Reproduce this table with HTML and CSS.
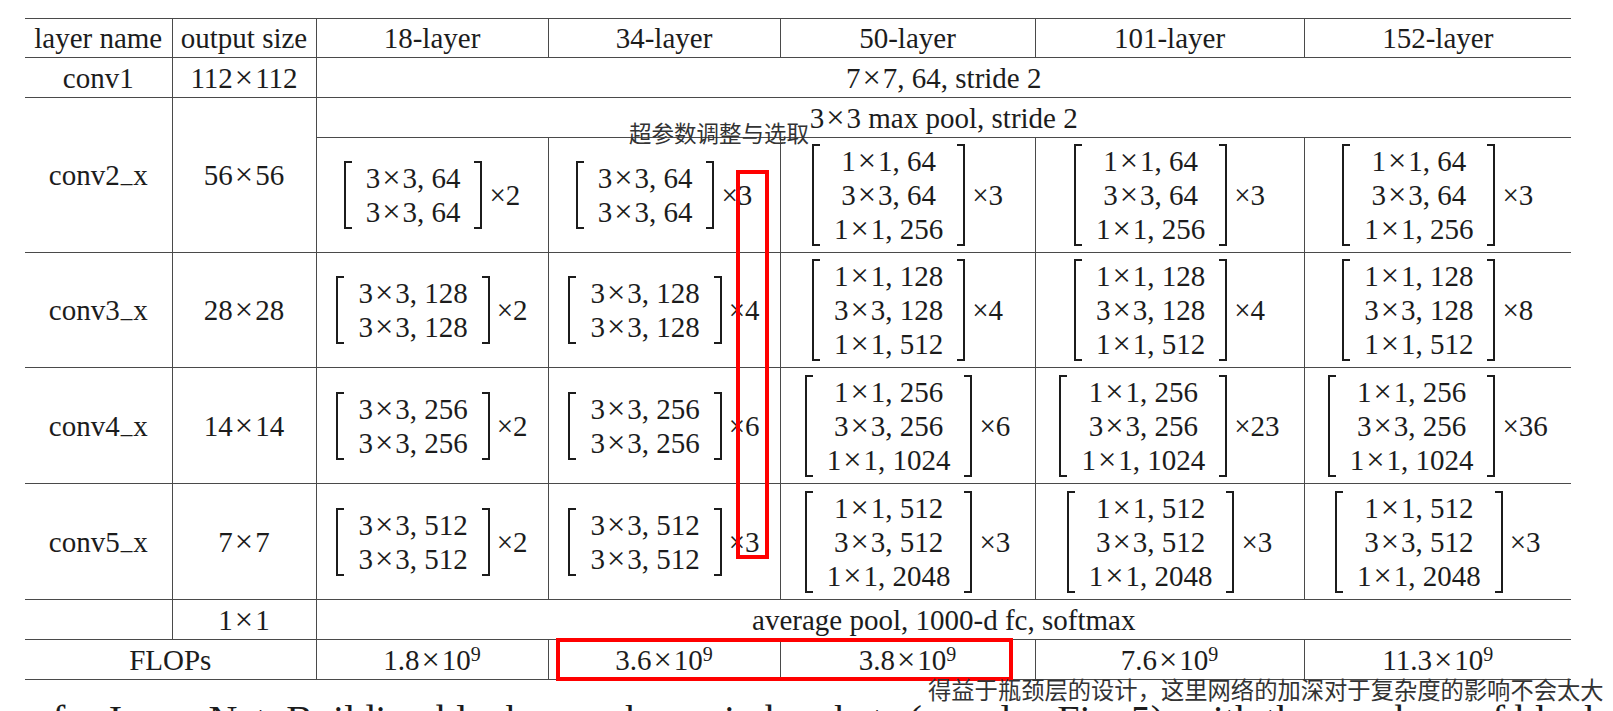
FILE: index.html
```html
<!DOCTYPE html>
<html>
<head>
  <meta charset="utf-8">
  <title>ImageNet architectures</title>
  <link rel="stylesheet" href="styles.css">
</head>
<body>
  <div class="sheet">
    <table class="arch">
      <colgroup>
        <col class="c-name"><col class="c-size"><col class="c-18"><col class="c-34"><col class="c-50"><col class="c-101"><col class="c-152">
      </colgroup>
      <tr class="r-head">
        <td>layer name</td>
        <td>output size</td>
        <td>18-layer</td>
        <td>34-layer</td>
        <td>50-layer</td>
        <td>101-layer</td>
        <td>152-layer</td>
      </tr>
      <tr class="r-line">
        <td>conv1</td>
        <td>112<span class="x">×</span>112</td>
        <td colspan="5">7<span class="x">×</span>7, 64, stride 2</td>
      </tr>
      <tr class="r-line">
        <td rowspan="2">conv2<span class="us">_</span>x</td>
        <td rowspan="2">56<span class="x">×</span>56</td>
        <td colspan="5">3<span class="x">×</span>3 max pool, stride 2</td>
      </tr>
      <tr class="r-block">
        <td><div class="blk"><div class="mat"><div>3<span class="x">×</span>3, 64</div><div>3<span class="x">×</span>3, 64</div></div><span class="rep">×2</span></div></td>
        <td><div class="blk"><div class="mat"><div>3<span class="x">×</span>3, 64</div><div>3<span class="x">×</span>3, 64</div></div><span class="rep">×3</span></div></td>
        <td><div class="blk"><div class="mat"><div>1<span class="x">×</span>1, 64</div><div>3<span class="x">×</span>3, 64</div><div>1<span class="x">×</span>1, 256</div></div><span class="rep">×3</span></div></td>
        <td><div class="blk"><div class="mat"><div>1<span class="x">×</span>1, 64</div><div>3<span class="x">×</span>3, 64</div><div>1<span class="x">×</span>1, 256</div></div><span class="rep">×3</span></div></td>
        <td><div class="blk"><div class="mat"><div>1<span class="x">×</span>1, 64</div><div>3<span class="x">×</span>3, 64</div><div>1<span class="x">×</span>1, 256</div></div><span class="rep">×3</span></div></td>
      </tr>
      <tr class="r-block">
        <td>conv3<span class="us">_</span>x</td>
        <td>28<span class="x">×</span>28</td>
        <td><div class="blk"><div class="mat"><div>3<span class="x">×</span>3, 128</div><div>3<span class="x">×</span>3, 128</div></div><span class="rep">×2</span></div></td>
        <td><div class="blk"><div class="mat"><div>3<span class="x">×</span>3, 128</div><div>3<span class="x">×</span>3, 128</div></div><span class="rep">×4</span></div></td>
        <td><div class="blk"><div class="mat"><div>1<span class="x">×</span>1, 128</div><div>3<span class="x">×</span>3, 128</div><div>1<span class="x">×</span>1, 512</div></div><span class="rep">×4</span></div></td>
        <td><div class="blk"><div class="mat"><div>1<span class="x">×</span>1, 128</div><div>3<span class="x">×</span>3, 128</div><div>1<span class="x">×</span>1, 512</div></div><span class="rep">×4</span></div></td>
        <td><div class="blk"><div class="mat"><div>1<span class="x">×</span>1, 128</div><div>3<span class="x">×</span>3, 128</div><div>1<span class="x">×</span>1, 512</div></div><span class="rep">×8</span></div></td>
      </tr>
      <tr class="r-block r-tall">
        <td>conv4<span class="us">_</span>x</td>
        <td>14<span class="x">×</span>14</td>
        <td><div class="blk"><div class="mat"><div>3<span class="x">×</span>3, 256</div><div>3<span class="x">×</span>3, 256</div></div><span class="rep">×2</span></div></td>
        <td><div class="blk"><div class="mat"><div>3<span class="x">×</span>3, 256</div><div>3<span class="x">×</span>3, 256</div></div><span class="rep">×6</span></div></td>
        <td><div class="blk"><div class="mat"><div>1<span class="x">×</span>1, 256</div><div>3<span class="x">×</span>3, 256</div><div>1<span class="x">×</span>1, 1024</div></div><span class="rep">×6</span></div></td>
        <td><div class="blk"><div class="mat"><div>1<span class="x">×</span>1, 256</div><div>3<span class="x">×</span>3, 256</div><div>1<span class="x">×</span>1, 1024</div></div><span class="rep">×23</span></div></td>
        <td><div class="blk"><div class="mat"><div>1<span class="x">×</span>1, 256</div><div>3<span class="x">×</span>3, 256</div><div>1<span class="x">×</span>1, 1024</div></div><span class="rep">×36</span></div></td>
      </tr>
      <tr class="r-block r-tall">
        <td>conv5<span class="us">_</span>x</td>
        <td>7<span class="x">×</span>7</td>
        <td><div class="blk"><div class="mat"><div>3<span class="x">×</span>3, 512</div><div>3<span class="x">×</span>3, 512</div></div><span class="rep">×2</span></div></td>
        <td><div class="blk"><div class="mat"><div>3<span class="x">×</span>3, 512</div><div>3<span class="x">×</span>3, 512</div></div><span class="rep">×3</span></div></td>
        <td><div class="blk"><div class="mat"><div>1<span class="x">×</span>1, 512</div><div>3<span class="x">×</span>3, 512</div><div>1<span class="x">×</span>1, 2048</div></div><span class="rep">×3</span></div></td>
        <td><div class="blk"><div class="mat"><div>1<span class="x">×</span>1, 512</div><div>3<span class="x">×</span>3, 512</div><div>1<span class="x">×</span>1, 2048</div></div><span class="rep">×3</span></div></td>
        <td><div class="blk"><div class="mat"><div>1<span class="x">×</span>1, 512</div><div>3<span class="x">×</span>3, 512</div><div>1<span class="x">×</span>1, 2048</div></div><span class="rep">×3</span></div></td>
      </tr>
      <tr class="r-line">
        <td></td>
        <td>1<span class="x">×</span>1</td>
        <td colspan="5">average pool, 1000-d fc, softmax</td>
      </tr>
      <tr class="r-line">
        <td colspan="2">FLOPs</td>
        <td>1.8<span class="x">×</span>10<sup class="e">9</sup></td>
        <td>3.6<span class="x">×</span>10<sup class="e">9</sup></td>
        <td>3.8<span class="x">×</span>10<sup class="e">9</sup></td>
        <td>7.6<span class="x">×</span>10<sup class="e">9</sup></td>
        <td>11.3<span class="x">×</span>10<sup class="e">9</sup></td>
      </tr>
    </table>

    <p class="caption">for ImageNet. Building blocks are shown in brackets (see also Fig. 5), with the numbers of blocks stacked.</p>

    <!-- hand annotations over the table -->
    <div class="note note-top">超参数调整与选取</div>
    <div class="mark mark-col"></div>
    <div class="mark mark-flops"></div>
    <div class="note note-bottom">得益于瓶颈层的设计，这里网络的加深对于复杂度的影响不会太大</div>
  </div>
</body>
</html>
```

FILE: styles.css
```css
html, body {
  margin: 0;
  height: 711px;
  overflow: hidden;
  background: #fff;
}
body {
  font-family: "Liberation Serif", "Times New Roman", serif;
  color: #1c1c1c;
}
.sheet {
  position: relative;
  box-sizing: border-box;
  width: 1613px;
  height: 711px;
  padding: 18px 0 0 25px;
  overflow: hidden;
}
.arch {
  border-collapse: collapse;
  table-layout: fixed;
  width: 1546px;
  font-size: 29px;
  border-left: hidden;
  border-right: hidden;
}
.arch td {
  border: 1px solid #4a4a4a;
  padding: 0;
  text-align: center;
  vertical-align: middle;
  line-height: 30px;
  white-space: nowrap;
}
.c-name { width: 147px; }
.c-size { width: 144px; }
.c-18 { width: 232px; }
.c-34 { width: 232px; }
.c-50 { width: 255px; }
.c-101 { width: 269px; }
.c-152 { width: 267px; }
.r-head { height: 39px; }
.r-line { height: 40px; }
.r-block { height: 115px; }
.r-tall { height: 116px; }
.x {
  margin: 0 2px;
  font-size: 1.12em;
  line-height: 0;
}
.us {
  display: inline-block;
  font-size: 0.8em;
  line-height: 0;
  vertical-align: 3px;
  margin: 0 1px;
}
.e {
  font-size: 20px;
  line-height: 0;
  vertical-align: 9px;
}
.blk {
  display: flex;
  justify-content: center;
  align-items: center;
}
.mat {
  position: relative;
  padding: 0 22px;
  line-height: 34px;
}
.mat::before,
.mat::after {
  content: "";
  position: absolute;
  top: 0;
  bottom: 0;
  width: 6px;
  border: 2px solid #1c1c1c;
}
.mat::before {
  left: 0;
  border-right: none;
}
.mat::after {
  right: 0;
  border-left: none;
}
.rep {
  margin-left: 7px;
}
.caption {
  margin: 20px 0 0 27px;
  font-size: 40px;
  line-height: 40px;
  white-space: nowrap;
}
.note {
  position: absolute;
  font-family: "Noto Sans CJK SC", sans-serif;
  color: #333;
  white-space: nowrap;
}
.note-top {
  left: 629px;
  top: 120px;
  font-size: 22.5px;
  line-height: 24px;
}
.note-bottom {
  left: 928px;
  top: 677px;
  font-size: 23.3px;
  line-height: 24px;
}
.mark {
  position: absolute;
  box-sizing: border-box;
  border: 4px solid #f00;
}
.mark-col {
  left: 736px;
  top: 170px;
  width: 33px;
  height: 389px;
}
.mark-flops {
  left: 556px;
  top: 638px;
  width: 457px;
  height: 43px;
}
```
